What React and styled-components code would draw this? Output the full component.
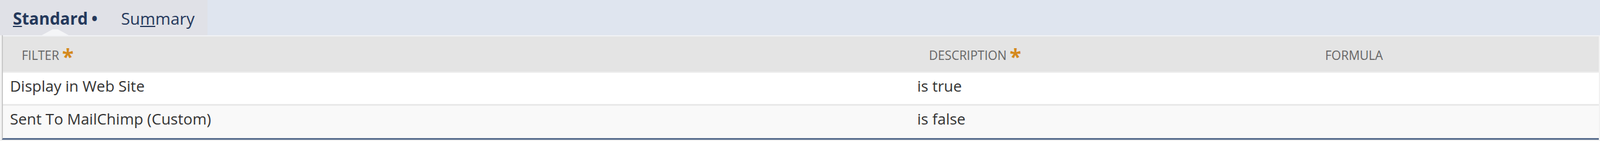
import React from "react";
import styled, { createGlobalStyle } from "styled-components";

const Global = createGlobalStyle`
  html, body { margin: 0; padding: 0; }
  body {
    background: #f2f2f2;
    font-family: "Open Sans", "Noto Sans", Arial, sans-serif;
    width: 2730px;
    overflow: hidden;
  }
`;

const Page = styled.div`
  display: flex;
  flex-direction: column;
  width: 2730px;
  height: 238px;
`;

const TabStrip = styled.div`
  display: flex;
  height: 60px;
  background: #dfe5ef;
`;

const TabGroup = styled.div`
  display: flex;
  align-items: flex-start;
  gap: 40px;
  padding: 12px 21px 0 22px;
  width: 354px;
  box-sizing: border-box;
  background: #e0e1e7;
`;

const Tab = styled.div`
  position: relative;
  height: 48px;
  font-size: 28px;
  line-height: 38px;
  font-weight: ${(p) => (p.$active ? 700 : 400)};
  color: #24385b;
  white-space: nowrap;

  &::after {
    content: "";
    display: ${(p) => (p.$active ? "block" : "none")};
    position: absolute;
    left: 50%;
    bottom: 0;
    width: 46px;
    height: 10px;
    margin-left: -23px;
    background: #f4f5f7;
    clip-path: polygon(0 100%, 40% 0, 60% 0, 100% 100%);
  }
`;

const Key = styled.span`
  text-decoration: underline;
  text-decoration-thickness: 2px;
  text-underline-offset: 2px;
`;

const Dot = styled.span`
  margin-left: 6px;
`;

const Body = styled.div`
  display: flex;
  flex: 1;
  padding: 0 2px 0 3px;
`;

const Table = styled.div`
  flex: 1;
  display: flex;
  flex-direction: column;
  padding-top: 2px;
  background: #f1f2f5;
  border-left: 2px solid #c9c9c9;
  border-bottom: 3px solid #5a6f8f;
`;

const Row = styled.div`
  display: grid;
  grid-template-columns: 1548px 676px 1fr;
  height: ${(p) => p.$h}px;
  background: ${(p) => p.$bg};
  border-bottom: ${(p) => p.$line || "none"};
`;

const HeadCell = styled.div`
  padding: 18px 0 0 32px;
  font-size: 21px;
  line-height: 29px;
  color: #666666;
  text-transform: uppercase;
  white-space: nowrap;
`;

const Required = styled.span`
  margin-left: 5px;
  font-size: 36px;
  line-height: 0;
  font-weight: 700;
  color: #d4891c;
  vertical-align: -7px;
`;

const Cell = styled.div`
  padding: 4px 0 0 12px;
  font-size: 26px;
  line-height: normal;
  color: #333333;
  white-space: nowrap;
`;

const rows = [
  { filter: "Display in Web Site", desc: "is true", formula: "", bg: "#ffffff", h: 53, line: "3px solid #e9e9e9" },
  { filter: "Sent To MailChimp (Custom)", desc: "is false", formula: "", bg: "#f9f9f9", h: 55 },
];

export default function App() {
  return (
    <>
      <Global />
      <Page>
        <TabStrip>
          <TabGroup>
            <Tab $active>
              <Key>S</Key>tandard<Dot>•</Dot>
            </Tab>
            <Tab>
              Su<Key>m</Key>mary
            </Tab>
          </TabGroup>
        </TabStrip>
        <Body>
          <Table>
            <Row $h={60} $bg="#e4e4e4" $line="2px solid #eeeeee">
              <HeadCell>
                Filter<Required>*</Required>
              </HeadCell>
              <HeadCell>
                Description<Required>*</Required>
              </HeadCell>
              <HeadCell>Formula</HeadCell>
            </Row>
            {rows.map((r) => (
              <Row key={r.filter} $h={r.h} $bg={r.bg} $line={r.line}>
                <Cell>{r.filter}</Cell>
                <Cell>{r.desc}</Cell>
                <Cell>{r.formula}</Cell>
              </Row>
            ))}
          </Table>
        </Body>
      </Page>
    </>
  );
}
